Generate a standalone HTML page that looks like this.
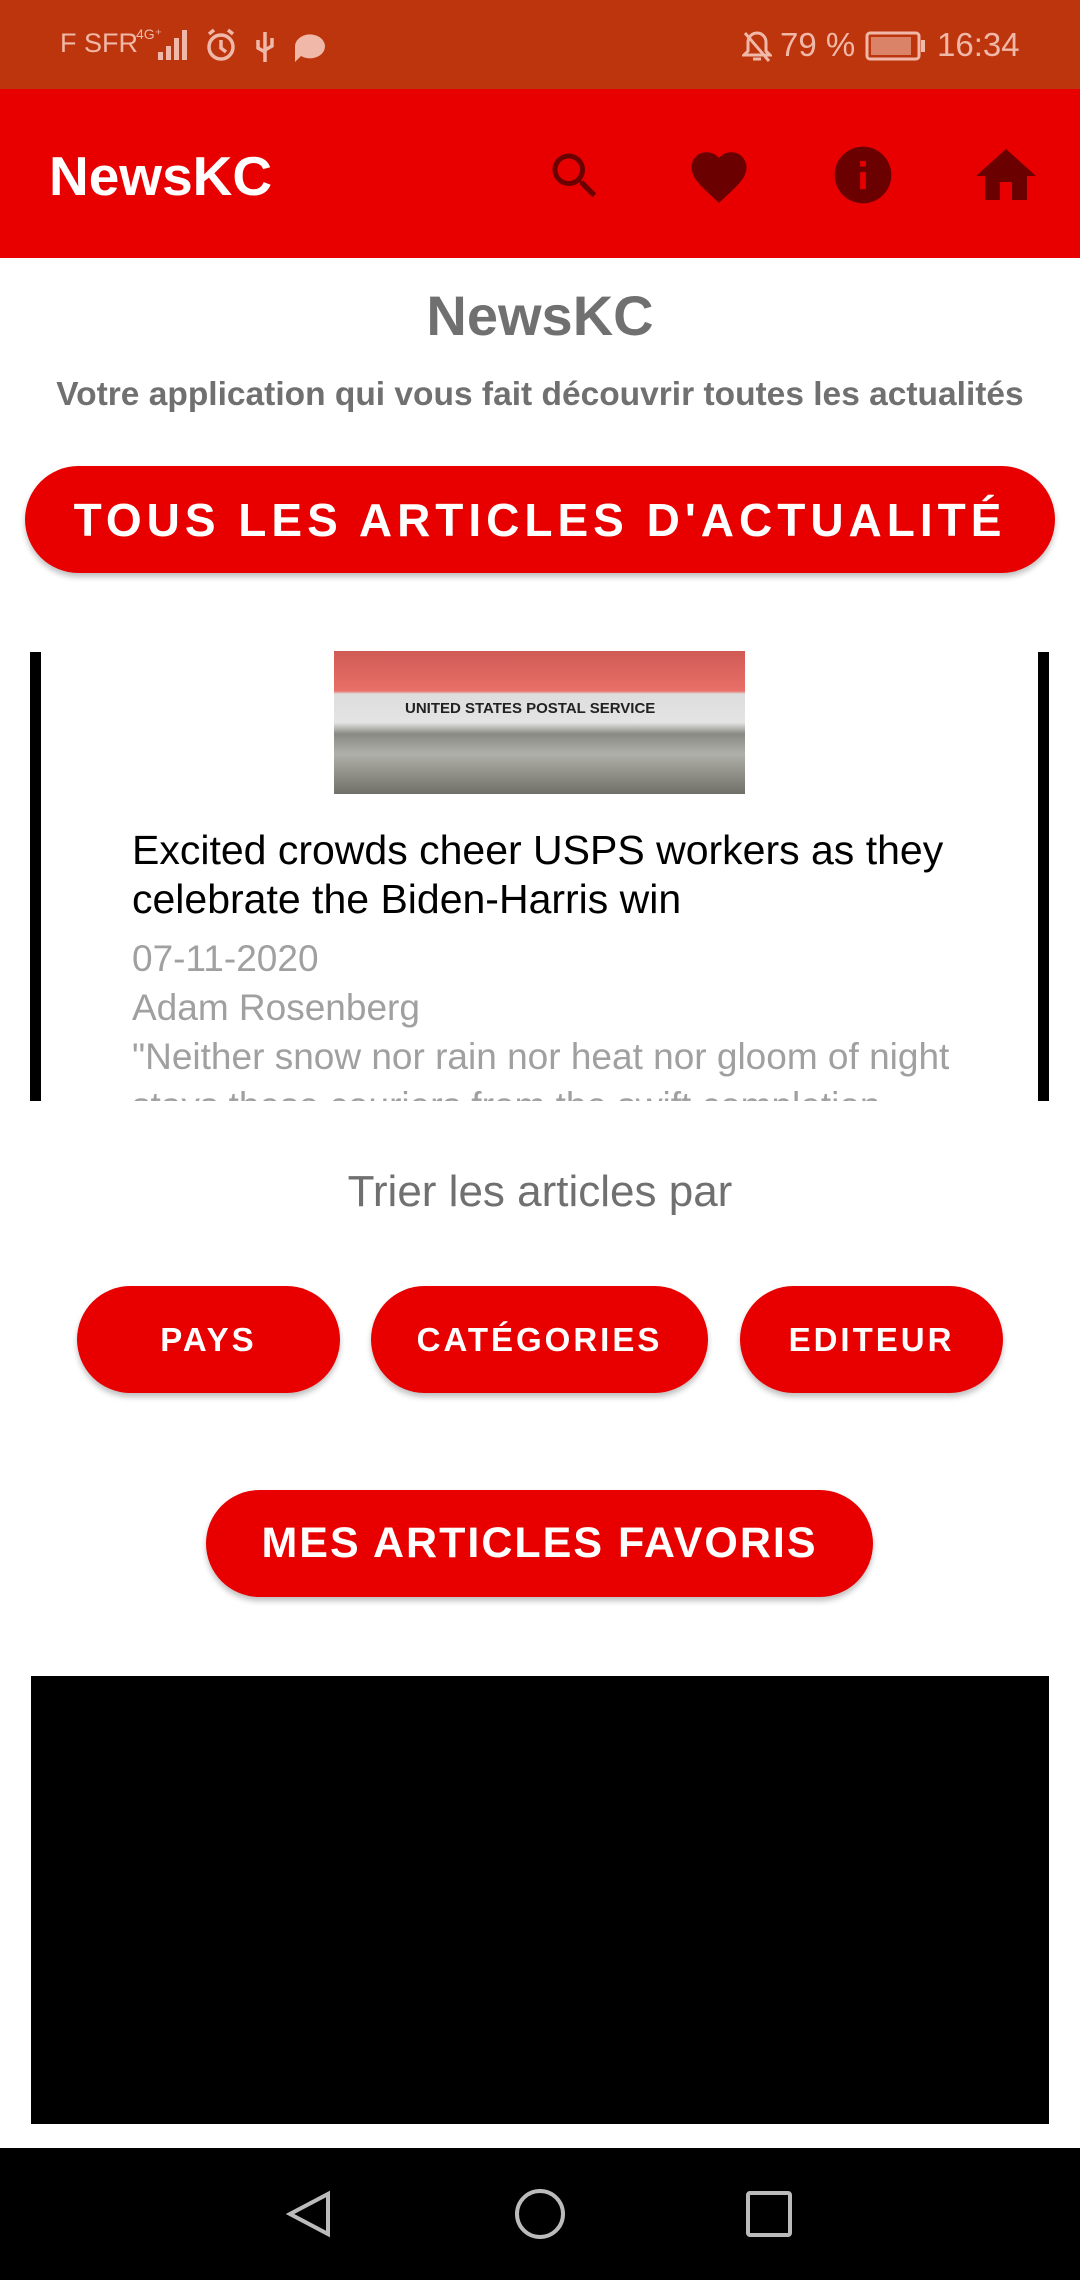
<!DOCTYPE html>
<html><head><meta charset="utf-8"><style>
*{margin:0;padding:0;box-sizing:border-box}
body{width:1080px;height:2280px;position:relative;background:#fff;font-family:"Liberation Sans",sans-serif;overflow:hidden}
.a{position:absolute}
.btn{position:absolute;background:#e80000;color:#fff;border-radius:54px;display:flex;align-items:center;justify-content:center;font-weight:bold;letter-spacing:3px;box-shadow:0 4px 6px rgba(0,0,0,.25)}
</style></head><body>
<div class="a" style="left:0;top:0;width:1080px;height:89px;background:#bc350c"></div>
<div class="a" style="left:60px;top:28px;color:#f0b8a8;font-size:27px">F SFR</div>
<div class="a" style="left:136px;top:26px;color:#f0b8a8;font-size:14px">4G⁺</div>
<svg class="a" style="left:140px;top:28px" width="50" height="34"><g fill="#f0b8a8"><rect x="18" y="24" width="5" height="8"/><rect x="26" y="18" width="5" height="14"/><rect x="34" y="10" width="5" height="22"/><rect x="42" y="2" width="5" height="30"/></g></svg>
<svg class="a" style="left:203px;top:28px" width="130" height="36"><g stroke="#f0b8a8" fill="none" stroke-width="3.5"><circle cx="18" cy="19" r="12"/><path d="M18 12v8l5 4M6 6l5-4M30 6l-5-4"/><path d="M62 4v30M55 12v8l7 4M69 10v8l-7 4"/></g><path d="M92 18a15 12 0 1 1 6 10l-6 6z" fill="#f0b8a8"/></svg>
<svg class="a" style="left:742px;top:30px" width="30" height="34"><path d="M15 3a9 9 0 0 1 9 9v9l4 4H2l4-4v-9a9 9 0 0 1 9-9zM3 3l24 28M11 29h8" stroke="#f0b8a8" stroke-width="3" fill="none"/></svg>
<div class="a" style="left:780px;top:26px;color:#f0b8a8;font-size:33px">79 %</div>
<svg class="a" style="left:865px;top:31px" width="62" height="30"><rect x="2" y="2" width="52" height="26" rx="3" stroke="#f0b8a8" stroke-width="3" fill="none"/><rect x="6" y="6" width="40" height="18" fill="#f0b8a8" opacity=".6"/><rect x="56" y="9" width="4" height="12" fill="#f0b8a8"/></svg>
<div class="a" style="left:937px;top:26px;color:#f0b8a8;font-size:33px">16:34</div>
<div class="a" style="left:0;top:89px;width:1080px;height:169px;background:#e80000"></div>
<div class="a" style="left:49px;top:144px;color:#fff;font-size:55px;font-weight:bold">NewsKC</div>
<svg class="a" style="left:545px;top:146px" width="60" height="60" viewBox="0 0 24 24"><path fill="#6b0000" d="M15.5 14h-.79l-.28-.27A6.470 6.470 0 0 0 16 9.5 6.5 6.5 0 1 0 9.5 16c1.61 0 3.09-.59 4.230-1.57l.27.28v.79l5 4.99L20.49 19l-4.99-5zm-6 0C7.01 14 5 11.99 5 9.5S7.01 5 9.5 5 14 7.01 14 9.5 11.99 14 9.5 14z"/></svg>
<svg class="a" style="left:686px;top:144px" width="66" height="66" viewBox="0 0 24 24"><path fill="#6b0000" d="M12 21.35l-1.45-1.32C5.4 15.36 2 12.28 2 8.5 2 5.42 4.42 3 7.5 3c1.74 0 3.41.81 4.5 2.09C13.09 3.81 14.76 3 16.5 3 19.58 3 22 5.420 22 8.5c0 3.78-3.4 6.86-8.55 11.54L12 21.35z"/></svg>
<svg class="a" style="left:829px;top:141px" width="68" height="68" viewBox="0 0 24 24"><path fill="#6b0000" d="M12 2C6.48 2 2 6.48 2 12s4.48 10 10 10 10-4.48 10-10S17.52 2 12 2zm1 15h-2v-6h2v6zm0-8h-2V7h2v2z"/></svg>
<svg class="a" style="left:970px;top:140px" width="72" height="72" viewBox="0 0 24 24"><path fill="#6b0000" d="M10 20v-6h4v6h5v-8h3L12 3 2 12h3v8z"/></svg>
<div class="a" style="left:0;top:283px;width:1080px;text-align:center;color:#707070;font-size:56px;font-weight:bold">NewsKC</div>
<div class="a" style="left:0;top:376px;width:1080px;text-align:center;color:#707070;font-size:33.5px;font-weight:bold">Votre application qui vous fait découvrir toutes les actualités</div>
<div class="btn" style="left:25px;top:466px;width:1030px;height:107px;font-size:46px;letter-spacing:5px">TOUS LES ARTICLES D'ACTUALITÉ</div>
<div class="a" style="left:30px;top:652px;width:11px;height:449px;background:#000"></div>
<div class="a" style="left:1038px;top:652px;width:11px;height:449px;background:#000"></div>
<div class="a" style="left:334px;top:651px;width:411px;height:143px;background:linear-gradient(#d05a55 0,#e87068 28%,#ddd 30%,#e4e4e4 50%,#8a8a84 58%,#b0b0aa 72%,#707068 100%)"></div>
<div class="a" style="left:405px;top:700px;font-size:15px;font-weight:bold;color:#222">UNITED STATES POSTAL SERVICE</div>
<div class="a" style="left:41px;top:652px;width:997px;height:449px;overflow:hidden">
<div class="a" style="left:91px;top:174px;width:880px;color:#000;font-size:41px;line-height:49px">Excited crowds cheer USPS workers as they celebrate the Biden-Harris win</div>
<div class="a" style="left:91px;top:282px;color:#a0a0a0;font-size:37px;line-height:49px">07-11-2020</div>
<div class="a" style="left:91px;top:331px;color:#a0a0a0;font-size:37px;line-height:49px">Adam Rosenberg</div>
<div class="a" style="left:91px;top:380px;width:880px;color:#a0a0a0;font-size:37px;line-height:49px">"Neither snow nor rain nor heat nor gloom of night stays these couriers from the swift completion</div>
</div>
<div class="a" style="left:0;top:1167px;width:1080px;text-align:center;color:#707070;font-size:44px">Trier les articles par</div>
<div class="btn" style="left:77px;top:1286px;width:263px;height:107px;font-size:33px">PAYS</div>
<div class="btn" style="left:371px;top:1286px;width:337px;height:107px;font-size:33px">CATÉGORIES</div>
<div class="btn" style="left:740px;top:1286px;width:263px;height:107px;font-size:33px">EDITEUR</div>
<div class="btn" style="left:206px;top:1490px;width:667px;height:107px;font-size:43px;letter-spacing:2px">MES ARTICLES FAVORIS</div>
<div class="a" style="left:31px;top:1676px;width:1018px;height:448px;background:#000"></div>
<div class="a" style="left:0;top:2148px;width:1080px;height:132px;background:#000"></div>
<svg class="a" style="left:0;top:2148px" width="1080" height="132"><g stroke="#bbb" stroke-width="4" fill="none"><path d="M328 46v40L290 66z"/><circle cx="540" cy="66" r="23"/><rect x="748" y="45" width="42" height="42" rx="2"/></g></svg>
</body></html>
